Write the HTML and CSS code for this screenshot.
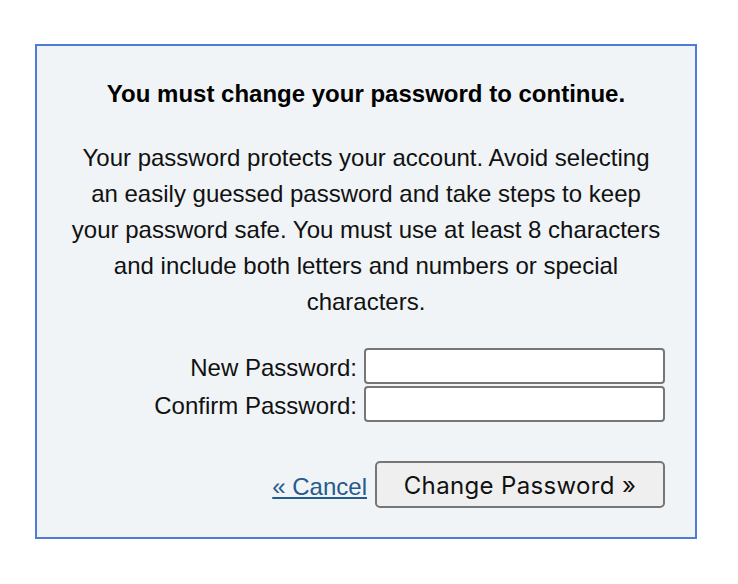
FILE: index.html
```html
<!DOCTYPE html>
<html>
<head>
<meta charset="utf-8">
<link rel="stylesheet" href="styles.css">
</head>
<body>
<div class="box">
  <h1 class="title">You must change your password to continue.</h1>
  <p class="intro">Your password protects your account. Avoid selecting an easily guessed password and take steps to keep your password safe. You must use at least 8 characters and include both letters and numbers or special characters.</p>
  <form class="form">
    <label class="label" for="np">New Password:</label>
    <input class="field" id="np" type="password">
    <label class="label" for="cp">Confirm Password:</label>
    <input class="field" id="cp" type="password">
    <div class="actions">
      <a class="cancel" href="#">« Cancel</a>
      <button class="submit" type="button">Change Password »</button>
    </div>
  </form>
</div>
</body>
</html>
```
FILE: styles.css
```css
html, body {
  margin: 0;
  padding: 0;
  background: #ffffff;
}
body {
  font-family: "Liberation Sans", Arial, sans-serif;
  color: #111111;
}
.box {
  box-sizing: border-box;
  width: 662px;
  margin: 44px 0 0 35px;
  border: 2px solid #4f7bd7;
  background: #f0f4f7;
  padding: 34px 30px 29px 30px;
}
.title {
  margin: 0;
  font-size: 24px;
  line-height: 28px;
  font-weight: bold;
  text-align: center;
  color: #000;
}
.intro {
  margin: 32px 0 0 0;
  font-size: 24px;
  line-height: 36px;
  text-align: center;
  color: #111;
}
.form {
  margin-top: 28px;
  display: grid;
  grid-template-columns: auto 301px;
  justify-content: end;
  column-gap: 7px;
  row-gap: 2px;
  align-items: center;
}
.label {
  font-size: 24px;
  line-height: 28px;
  padding-top: 4px;
  text-align: right;
  color: #111;
}
.field {
  box-sizing: border-box;
  width: 301px;
  height: 36px;
  margin: 0;
  border: 2px solid #767676;
  border-radius: 4px;
  background: #fff;
}
.actions {
  grid-column: 1 / 3;
  display: flex;
  justify-content: flex-end;
  align-items: center;
  gap: 8px;
  margin-top: 37px;
}
.cancel {
  font-size: 24px;
  color: #255b8c;
  text-decoration: underline;
  margin-top: 4px;
}
.submit {
  box-sizing: border-box;
  width: 290px;
  height: 47px;
  margin: 0;
  padding-top: 2px;
  border: 2px solid #767676;
  border-radius: 5px;
  background: #efefef;
  font-family: Inter, "Open Sans", sans-serif;
  font-size: 24px;
  color: #111;
  letter-spacing: 0.35px;
}
```
